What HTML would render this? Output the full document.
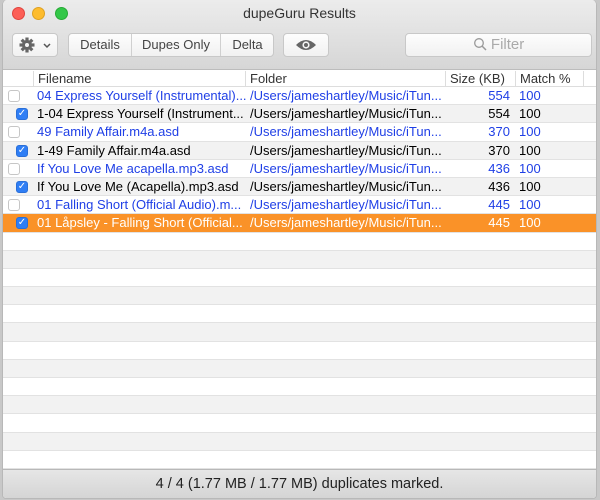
<!DOCTYPE html>
<html><head><meta charset="utf-8"><style>
*{margin:0;padding:0;box-sizing:border-box}
body{width:600px;height:500px;background:#c8c8c8;font-family:"Liberation Sans",sans-serif;font-size:13px;overflow:hidden;position:relative}
.win{position:absolute;left:2px;top:0;width:595px;height:499px;background:#fff;border-radius:5px 5px 4px 4px;overflow:hidden;border:1px solid #b8b8b8;border-top:none}
.tb{position:absolute;left:0;top:0;width:100%;height:70px;background:linear-gradient(#ececec,#d6d6d6);border-bottom:1px solid #bcbcbc}
.tl{position:absolute;top:7px;width:13px;height:13px;border-radius:50%}
.title{position:absolute;top:5px;left:0;width:100%;text-align:center;font-size:14px;color:#333}
.btn{position:absolute;top:33px;height:24px;background:linear-gradient(#fdfdfd,#f1f1f1);border:1px solid #c8c8c8;border-radius:4px;color:#444;font-size:13px;line-height:22px;text-align:center}
.seg{position:absolute;top:0;height:22px;border-right:1px solid #d0d0d0}
.hdr{position:absolute;top:70px;left:0;width:100%;height:17px;background:#fff;border-bottom:1px solid #ddd;color:#333}
.hdr span{position:absolute;top:1px;padding-left:4px;border-left:1px solid #ddd;height:15px;line-height:15px}
.rows{position:absolute;top:87px;left:0;width:100%}
.r{height:18.2px;position:relative;border-bottom:1px solid #e2e2e2;white-space:nowrap;line-height:17px}
.r:nth-child(even){background:#f2f2f2}
.r.sel{background:#fa9228;color:#fff}
.b{color:#1f3fe6}
.r .c{position:absolute}
.cb{position:absolute;top:3px;width:12px;height:12px;border:1px solid #c6c6c6;border-radius:3px;background:#fff}
.ck{background:#2f7ef5;border-color:#2a6fd8;color:#fff;font-size:10px;line-height:10px;text-align:center}
.ft{position:absolute;top:469px;left:0;width:100%;height:30px;background:linear-gradient(#e6e6e6,#d4d4d4);border-top:1px solid #b8b8b8;text-align:center;line-height:29px;font-size:14.5px;color:#222}
</style></head><body>
<div class="win">
<div class="tb">
<div class="tl" style="left:9px;background:#fc5f57;border:1px solid #e0443e"></div>
<div class="tl" style="left:29px;background:#fdbc2e;border:1px solid #dea123"></div>
<div class="tl" style="left:52px;background:#33c748;border:1px solid #27aa35"></div>
<div class="title">dupeGuru Results</div>
<div class="btn" style="left:9px;width:46px">
<svg width="44" height="22" viewBox="0 0 44 22"><g fill="#666" transform="translate(14,11)"><circle r="5"/><g><rect x="-1.6" y="-7.5" width="3.2" height="15"/><rect x="-1.6" y="-7.5" width="3.2" height="15" transform="rotate(45)"/><rect x="-1.6" y="-7.5" width="3.2" height="15" transform="rotate(90)"/><rect x="-1.6" y="-7.5" width="3.2" height="15" transform="rotate(135)"/></g><circle r="2" fill="#f6f6f6"/></g><path d="M31 10l3 3 3-3" stroke="#555" stroke-width="1.5" fill="none"/></svg>
</div>
<div class="btn" style="left:65px;width:206px">
<div class="seg" style="left:0;width:63px">Details</div>
<div class="seg" style="left:63px;width:89px">Dupes Only</div>
<div class="seg" style="left:152px;width:53px;border:none">Delta</div>
</div>
<div class="btn" style="left:280px;width:46px">
<svg width="44" height="22" viewBox="0 0 44 22"><path d="M12 11q10-10 20 0q-10 10-20 0z" fill="#666"/><circle cx="22" cy="11" r="3.6" fill="#f6f6f6"/><circle cx="22" cy="11" r="2" fill="#666"/></svg>
</div>
<div class="btn" style="left:402px;width:187px;color:#aaa;font-size:15px">
<svg width="14" height="14" viewBox="0 0 14 14" style="vertical-align:-2px"><circle cx="6" cy="6" r="4.3" stroke="#999" stroke-width="1.3" fill="none"/><path d="M9 9l4 4" stroke="#999" stroke-width="1.5"/></svg> Filter</div>
</div>
<div class="hdr">
<span style="left:30px">Filename</span>
<span style="left:242px">Folder</span>
<span style="left:442px">Size (KB)</span>
<span style="left:512px">Match %</span>
<span style="left:580px"></span>
</div>
<div class="rows">
<div class="r b"><div class="cb" style="left:5px"></div><span class="c" style="left:34px">04 Express Yourself (Instrumental)...</span><span class="c" style="left:247px">/Users/jameshartley/Music/iTun...</span><span class="c" style="right:86px">554</span><span class="c" style="left:516px">100</span></div>
<div class="r"><div class="cb ck" style="left:13px">✓</div><span class="c" style="left:34px">1-04 Express Yourself (Instrument...</span><span class="c" style="left:247px">/Users/jameshartley/Music/iTun...</span><span class="c" style="right:86px">554</span><span class="c" style="left:516px">100</span></div>
<div class="r b"><div class="cb" style="left:5px"></div><span class="c" style="left:34px">49 Family Affair.m4a.asd</span><span class="c" style="left:247px">/Users/jameshartley/Music/iTun...</span><span class="c" style="right:86px">370</span><span class="c" style="left:516px">100</span></div>
<div class="r"><div class="cb ck" style="left:13px">✓</div><span class="c" style="left:34px">1-49 Family Affair.m4a.asd</span><span class="c" style="left:247px">/Users/jameshartley/Music/iTun...</span><span class="c" style="right:86px">370</span><span class="c" style="left:516px">100</span></div>
<div class="r b"><div class="cb" style="left:5px"></div><span class="c" style="left:34px">If You Love Me acapella.mp3.asd</span><span class="c" style="left:247px">/Users/jameshartley/Music/iTun...</span><span class="c" style="right:86px">436</span><span class="c" style="left:516px">100</span></div>
<div class="r"><div class="cb ck" style="left:13px">✓</div><span class="c" style="left:34px">If You Love Me (Acapella).mp3.asd</span><span class="c" style="left:247px">/Users/jameshartley/Music/iTun...</span><span class="c" style="right:86px">436</span><span class="c" style="left:516px">100</span></div>
<div class="r b"><div class="cb" style="left:5px"></div><span class="c" style="left:34px">01 Falling Short (Official Audio).m...</span><span class="c" style="left:247px">/Users/jameshartley/Music/iTun...</span><span class="c" style="right:86px">445</span><span class="c" style="left:516px">100</span></div>
<div class="r sel"><div class="cb ck" style="left:13px">✓</div><span class="c" style="left:34px">01 Låpsley - Falling Short (Official...</span><span class="c" style="left:247px">/Users/jameshartley/Music/iTun...</span><span class="c" style="right:86px">445</span><span class="c" style="left:516px">100</span></div>
<div class="r"></div><div class="r"></div><div class="r"></div><div class="r"></div><div class="r"></div><div class="r"></div><div class="r"></div><div class="r"></div><div class="r"></div><div class="r"></div><div class="r"></div><div class="r"></div><div class="r"></div><div class="r"></div>
</div>
<div class="ft">4 / 4 (1.77 MB / 1.77 MB) duplicates marked.</div>
</div>
</body></html>
